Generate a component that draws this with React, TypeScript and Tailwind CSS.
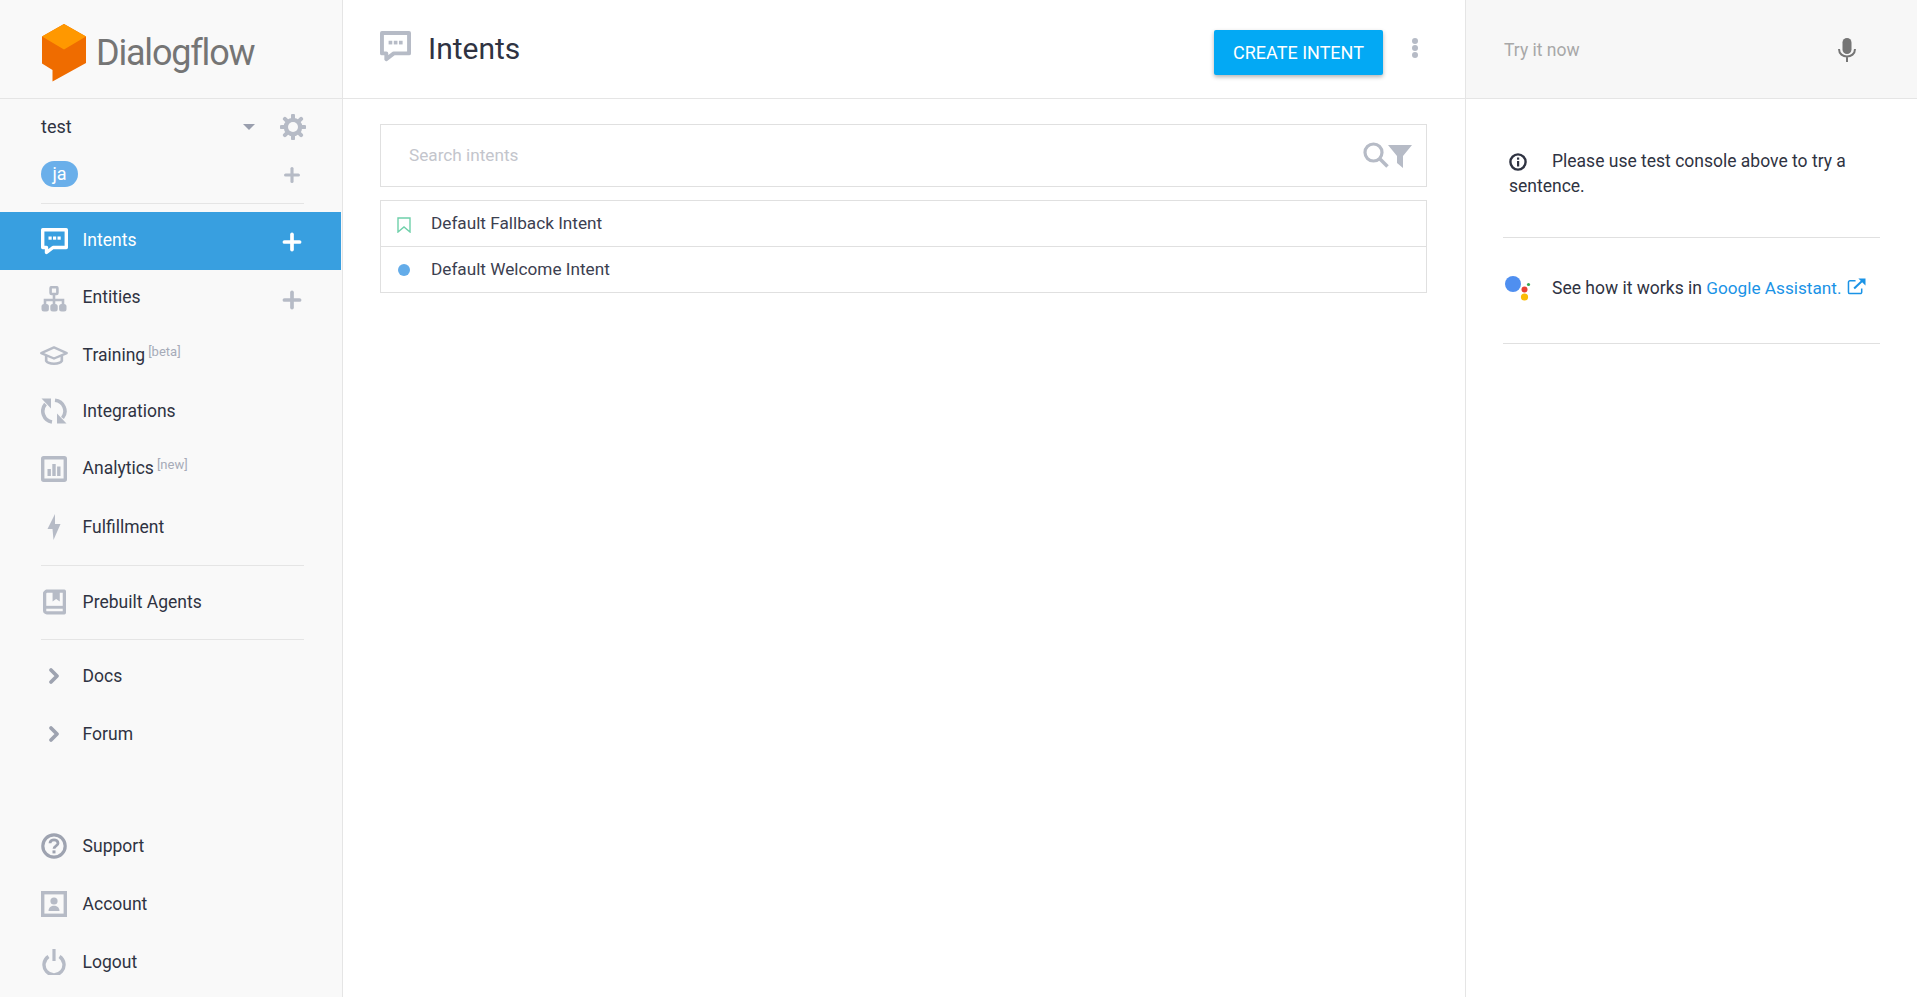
import React from 'react';
import { Plus, ChevronRight } from 'lucide-react';

const GREY = '#b6bbc6';

function ChatIcon({ className = '', color = GREY }: { className?: string; color?: string }) {
  return (
    <svg viewBox="0 0 27 27" className={className}>
      <path d="M1.7 1.7H25.3V19.5H12L5.5 24.5V19.5H1.7Z" fill="none" stroke={color} strokeWidth="3.4" strokeLinejoin="round" />
      <rect x="7.5" y="8.5" width="3.2" height="3.2" fill={color} />
      <rect x="12" y="8.5" width="3.2" height="3.2" fill={color} />
      <rect x="16.5" y="8.5" width="3.2" height="3.2" fill={color} />
    </svg>
  );
}

function EntitiesIcon() {
  return (
    <svg viewBox="0 0 26 26" className="w-[26px] h-[26px]">
      <path d="M13 8V13M4 20V14H22V20M13 13V20" fill="none" stroke={GREY} strokeWidth="2.6" />
      <rect x="9.6" y="1.2" width="6.8" height="6.8" rx="1" fill="none" stroke={GREY} strokeWidth="2.6" />
      <rect x="0.5" y="18" width="7.4" height="7.4" rx="2.5" fill={GREY} />
      <rect x="9.3" y="18" width="7.4" height="7.4" rx="2.5" fill={GREY} />
      <rect x="18.1" y="18" width="7.4" height="7.4" rx="2.5" fill={GREY} />
    </svg>
  );
}

function TrainingIcon() {
  return (
    <svg viewBox="0 0 34 24" className="w-[34px] h-[24px]">
      <path d="M17 1.5L32.5 8.5L17 15L1.5 8.5Z" fill="none" stroke={GREY} strokeWidth="2.8" strokeLinejoin="round" />
      <path d="M7.5 12V18C10 22.5 24 22.5 26.5 18V12" fill="none" stroke={GREY} strokeWidth="3.2" />
    </svg>
  );
}

function IntegrationsIcon() {
  return (
    <svg viewBox="0 0 26 26" className="w-[26px] h-[26px] -mt-[2px]">
      <path d="M4.5 6A11 11 0 0 0 11 24" fill="none" stroke={GREY} strokeWidth="3.6" />
      <path d="M14 2.2A11 11 0 0 1 21.5 20" fill="none" stroke={GREY} strokeWidth="3.6" />
      <path d="M0.5 0.5H10V10.5Z" fill={GREY} />
      <path d="M25.5 25.5H16V15.5Z" fill={GREY} />
    </svg>
  );
}

function AnalyticsIcon() {
  return (
    <svg viewBox="0 0 26 26" className="w-[26px] h-[26px]">
      <rect x="1.7" y="1.7" width="22.6" height="22.6" rx="1" fill="none" stroke={GREY} strokeWidth="3.4" />
      <rect x="6.5" y="13" width="3.4" height="7" fill={GREY} />
      <rect x="11.3" y="8" width="3.4" height="12" fill={GREY} />
      <rect x="16.1" y="10.5" width="3.4" height="9.5" fill={GREY} />
    </svg>
  );
}

function BoltIcon() {
  return (
    <svg viewBox="0 0 14 26" className="w-[14px] h-[26px]">
      <path d="M8 0L0.5 15H5.5L6.5 26L13.5 10H8Z" fill={GREY} />
    </svg>
  );
}

function BookIcon() {
  return (
    <svg viewBox="0 0 24 26" className="w-[23px] h-[26px]">
      <path d="M3.5 1.7H22.3V24.3H4A2.3 2.3 0 0 1 1.7 22V3.5Z" fill="none" stroke={GREY} strokeWidth="3.4" strokeLinejoin="round" />
      <path d="M3 18.5H22" stroke={GREY} strokeWidth="3" />
      <path d="M10 2H17.5V12.5L13.7 9.8L10 12.5Z" fill={GREY} />
    </svg>
  );
}

function SupportIcon() {
  return (
    <svg viewBox="0 0 26 26" className="w-[26px] h-[26px]">
      <circle cx="13" cy="13" r="11.2" fill="none" stroke="#9ea3b0" strokeWidth="3.2" />
      <path d="M9 10.2C9 5.8 17 5.8 17 10.2C17 13 13 12.8 13 15.8" fill="none" stroke="#9ea3b0" strokeWidth="2.8" />
      <rect x="11.5" y="17.4" width="3" height="3" fill="#9ea3b0" />
    </svg>
  );
}

function AccountIcon() {
  return (
    <svg viewBox="0 0 26 26" className="w-[26px] h-[26px]">
      <rect x="1.7" y="1.7" width="22.6" height="22.6" fill="none" stroke={GREY} strokeWidth="3.4" />
      <circle cx="13" cy="10" r="3.6" fill={GREY} />
      <path d="M7.5 20C7.5 13 18.5 13 18.5 20Z" fill={GREY} />
    </svg>
  );
}

function PowerIcon() {
  return (
    <svg viewBox="0 0 24 26" className="w-[24px] h-[26px]">
      <path d="M6.5 7.5A10 10 0 1 0 17.5 7.5" fill="none" stroke={GREY} strokeWidth="3.4" />
      <path d="M12 0V12" stroke={GREY} strokeWidth="3.2" />
    </svg>
  );
}

function GearIcon() {
  return (
    <svg viewBox="0 0 26 26" className="w-[26px] h-[26px] mt-[2px]">
      <circle cx="13" cy="13" r="7.2" fill="none" stroke={GREY} strokeWidth="4.2" />
      <path d="M13 1.5V24.5M1.5 13H24.5M4.9 4.9L21.1 21.1M21.1 4.9L4.9 21.1" stroke={GREY} strokeWidth="4" strokeLinecap="round" />
      <circle cx="13" cy="13" r="5" fill="#f9f9f9" />
    </svg>
  );
}

function Logo() {
  return (
    <svg viewBox="0 0 46 58" className="w-[46px] h-[58px] mt-[7px]">
      <path d="M23 0L45 12.5V39L11.5 57.5V46L1 39.5V12.5Z" fill="#ef6c00" />
      <path d="M23 0L45 12.5L23 25.5L1 12.5Z" fill="#ff9800" />
    </svg>
  );
}

function NavRow({
  icon,
  label,
  tag,
  active,
  plus,
  low,
  h = 'h-[57.2px]',
}: {
  icon: React.ReactNode;
  label: string;
  tag?: string;
  active?: boolean;
  plus?: boolean;
  low?: boolean;
  h?: string;
}) {
  return (
    <div className={`flex items-center pl-[40px] pr-[36px] mr-[1px] ${h} ${active ? 'bg-[#389fe0] text-white' : 'text-[#2f3342]'}`}>
      <div className="w-[28px] flex justify-center shrink-0">{icon}</div>
      <span className={`ml-[14.6px] text-[17.5px] ${low ? '-mt-[0px]' : '-mt-[2px]'}`}>{label}</span>
      {tag && <span className="ml-[3px] text-[13px] text-[#a6abb8] -mt-[9px]">{tag}</span>}
      {plus && (
        <Plus
          className="ml-auto w-[26px] h-[26px] mt-[2px]"
          strokeWidth={3.4}
          color={active ? '#ffffff' : GREY}
        />
      )}
    </div>
  );
}

export default function App() {
  return (
    <div className="flex w-[1917px] h-[997px] overflow-hidden bg-white font-['Roboto',sans-serif] text-[#2f3342]">
      {/* Sidebar */}
      <aside className="w-[343px] shrink-0 bg-[#f9f9f9] border-r border-[#e5e5e5] flex flex-col">
        <div className="h-[99px] shrink-0 border-b border-[#e5e5e5] flex items-center pl-[41px]">
          <Logo />
          <span className="ml-[9px] text-[36px] tracking-[-1.2px] text-[#757575] mb-[-7px]">Dialogflow</span>
        </div>
        <div className="h-[105px] shrink-0 ml-[41px] mr-[38px] border-b border-[#e5e5e5] flex flex-col">
          <div className="flex items-center h-[50px]">
            <span className="text-[18px] mt-[5px]">test</span>
            <span className="ml-auto mr-[25px] mt-[6px] w-0 h-0 border-x-[6px] border-x-transparent border-t-[6px] border-t-[#9a9fae]" />
            <div className="mt-[3px] -mr-[2px]"><GearIcon /></div>
          </div>
          <div className="flex items-center justify-between mt-[12px]">
            <span className="bg-[#6aafea] text-white text-[18px] leading-[26px] h-[26px] w-[37px] text-center rounded-full">ja</span>
            <Plus className="w-[22px] h-[22px] mt-[2px] mr-[1px]" strokeWidth={3.4} color={GREY} />
          </div>
        </div>
        <div className="mt-[8px]">
          <NavRow active plus label="Intents" h="h-[58px]" icon={<ChatIcon className="w-[27px] h-[27px]" color="#ffffff" />} />
          <NavRow plus label="Entities" icon={<EntitiesIcon />} />
          <NavRow label="Training" tag="[beta]" icon={<TrainingIcon />} />
          <NavRow label="Integrations" h="h-[55.6px]" icon={<IntegrationsIcon />} />
          <NavRow label="Analytics" tag="[new]" h="h-[58.8px]" icon={<AnalyticsIcon />} />
          <NavRow low label="Fulfillment" icon={<BoltIcon />} />
        </div>
        <div className="ml-[41px] mr-[38px] mt-[9px] border-b border-[#e5e5e5]" />
        <NavRow low label="Prebuilt Agents" h="h-[73px]" icon={<BookIcon />} />
        <div className="ml-[41px] mr-[38px] border-b border-[#e5e5e5]" />
        <div className="mt-[7px]">
          <NavRow low label="Docs" h="h-[58px]" icon={<ChevronRight className="w-[24px] h-[24px]" strokeWidth={3.8} color="#9ea3b0" />} />
          <NavRow low label="Forum" h="h-[58px]" icon={<ChevronRight className="w-[24px] h-[24px]" strokeWidth={3.8} color="#9ea3b0" />} />
        </div>
        <div className="mt-auto mb-[6px]">
          <NavRow low label="Support" h="h-[58px]" icon={<SupportIcon />} />
          <NavRow low label="Account" h="h-[58px]" icon={<AccountIcon />} />
          <NavRow low label="Logout" h="h-[58px]" icon={<PowerIcon />} />
        </div>
      </aside>

      {/* Main */}
      <main className="w-[1123px] shrink-0 border-r border-[#e5e5e5] flex flex-col">
        <header className="h-[99px] shrink-0 border-b border-[#e5e5e5] flex items-center pl-[37px] pr-[47px]">
          <ChatIcon className="w-[31px] h-[31px] -mt-[5px]" />
          <h1 className="ml-[17px] text-[30px] -mt-[2px]">Intents</h1>
          <button className="ml-auto w-[169px] h-[45px] bg-[#03a9f4] text-white text-[18px] rounded-[2px] shadow-[0_2px_4px_rgba(0,0,0,0.3)] mt-[6px]">
            CREATE INTENT
          </button>
          <div className="ml-[29px] w-[6px] flex flex-col gap-[1px] -mt-[3px]">
            <span className="w-[6px] h-[6px] rounded-full bg-[#b6bbc6]" />
            <span className="w-[6px] h-[6px] rounded-full bg-[#b6bbc6]" />
            <span className="w-[6px] h-[6px] rounded-full bg-[#b6bbc6]" />
          </div>
        </header>
        <div className="pl-[37px] pr-[38px] pt-[25px]">
          <div className="h-[63px] border border-[#e0e0e0] flex items-center pl-[28px] pr-[13px]">
            <span className="text-[17.2px] text-[#c3c5cc]">Search intents</span>
            <svg viewBox="0 0 26 26" className="ml-auto w-[26px] h-[26px] -mt-[2px] -translate-x-[1px]">
              <circle cx="10.5" cy="10.5" r="8.5" fill="none" stroke={GREY} strokeWidth="3.2" />
              <path d="M16.5 16.5L24.5 24.5" stroke={GREY} strokeWidth="3.6" />
            </svg>
            <svg viewBox="0 0 24 24" className="w-[24px] h-[24px] -ml-[1px] -translate-x-[1px]">
              <path d="M0 1H24L15 12V24L9 19V12Z" fill={GREY} />
            </svg>
          </div>
          <div className="mt-[13px] border border-[#e0e0e0]">
            <div className="h-[46px] flex items-center border-b border-[#e0e0e0]">
              <svg viewBox="0 0 14 16" className="ml-[16px] w-[14px] h-[16px] mt-[2px]">
                <path d="M1 1H13V15L7 10L1 15Z" fill="none" stroke="#6fd0aa" strokeWidth="1.4" />
              </svg>
              <span className="ml-[20px] mt-[1px] text-[17.2px] text-[#3c4050]">Default Fallback Intent</span>
            </div>
            <div className="h-[45px] flex items-center">
              <span className="ml-[17px] w-[12px] h-[12px] rounded-full bg-[#64ace9]" />
              <span className="ml-[21px] mt-[1px] text-[17.2px] text-[#3c4050]">Default Welcome Intent</span>
            </div>
          </div>
        </div>
      </main>

      {/* Try it now panel */}
      <section className="flex-1 flex flex-col">
        <div className="h-[99px] shrink-0 bg-[#f7f7f7] border-b border-[#e5e5e5] flex items-center pl-[38px] pr-[61px]">
          <span className="text-[17.5px] text-[#a8a8a8] mt-[3px]">Try it now</span>
          <svg viewBox="0 0 18 24" className="ml-auto w-[18px] h-[24px] mt-[1px]">
            <rect x="4.5" y="0" width="9" height="16" rx="4.5" fill="#757575" />
            <path d="M1 11C1 21 17 21 17 11M9 18V24" fill="none" stroke="#757575" strokeWidth="2" />
          </svg>
        </div>
        <div className="mx-[37px] pt-[50px] h-[139px] border-b border-[#e0e0e0] text-[17.5px] leading-[25px]">
          <div className="pl-[6px]">
            <svg viewBox="0 0 18 18" className="inline-block w-[18px] h-[18px] -align-[1px] mr-[25px]">
              <circle cx="9" cy="9" r="7.6" fill="none" stroke="#2f3342" strokeWidth="2.4" />
              <rect x="8" y="8" width="2.2" height="5.5" fill="#2f3342" />
              <rect x="8" y="4.5" width="2.2" height="2.2" fill="#2f3342" />
            </svg>
            Please use test console above to try a
          </div>
          <div className="pl-[6px]">sentence.</div>
        </div>
        <div className="mx-[37px] h-[106px] border-b border-[#e0e0e0] flex items-center pl-[1px] text-[17.5px] pb-[5px]">
          <svg viewBox="0 0 28 26" className="w-[28px] h-[26px] mr-[20px] shrink-0">
            <circle cx="9" cy="9" r="8" fill="#4f8ff0" />
            <circle cx="20.5" cy="14.5" r="3" fill="#e84235" />
            <circle cx="20.5" cy="22" r="3.6" fill="#fbbc05" />
            <circle cx="24.5" cy="9.5" r="1.6" fill="#34a853" />
          </svg>
          <span>See how it works in <span className="text-[#1a93e6] text-[17.2px]">Google Assistant.</span></span>
          <svg viewBox="0 0 20 18" className="ml-[6px] w-[19px] h-[17px] -mt-[3px]">
            <path d="M9 3H3A1.5 1.5 0 0 0 1.5 4.5V15A1.5 1.5 0 0 0 3 16.5H14A1.5 1.5 0 0 0 15.5 15V11" fill="none" stroke="#1a93e6" strokeWidth="1.6" />
            <path d="M7.5 11L17 2" stroke="#1a93e6" strokeWidth="2.2" />
            <path d="M12 0.5H19.5V8Z" fill="#1a93e6" />
          </svg>
        </div>
      </section>
    </div>
  );
}
